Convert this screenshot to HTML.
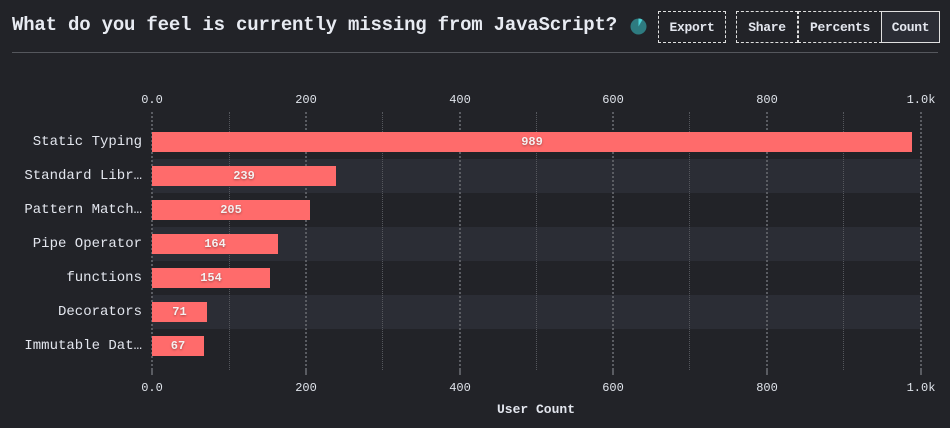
<!DOCTYPE html>
<html><head><meta charset="utf-8"><style>
*{margin:0;padding:0;box-sizing:border-box}
body{width:950px;height:428px;background:#222328;position:relative;overflow:hidden;font-family:"Liberation Mono","DejaVu Sans Mono",monospace;color:#e3e6ee}
.a{position:absolute}
.title{left:12px;top:14px;font-size:19px;font-weight:bold;letter-spacing:-0.2px;color:#e8ebf2;white-space:nowrap}
.btn{top:11px;height:32px;border:1px dashed #e0e0e0;font-size:13px;font-weight:bold;display:flex;align-items:center;justify-content:center;letter-spacing:-0.3px}
.hr{left:12px;top:52px;width:926px;height:1px;background:#55575d}
.stripe{left:152px;width:769px;height:34px;background:#2b2d35}
.grid{top:112px;height:258px;width:0;border-left:1px dotted #55575d}
.grid.maj{border-left:2px dotted #5a5c62}
.tick{width:2px;height:5px;background:#5a5c62}
.tl{font-size:12px;width:60px;text-align:center;color:#dfe3ea}
.lab{right:808px;font-size:14px;text-align:right;white-space:nowrap;color:#e3e6ee}
.bar{left:152px;height:20px;background:#ff6b6b;font-size:12px;font-weight:bold;color:#f5f0f0;display:flex;align-items:center;justify-content:center;text-shadow:0 1px 2px rgba(0,0,0,.35)}
</style></head><body>
<div class="a title">What do you feel is currently missing from JavaScript?</div>
<svg class="a" style="left:630px;top:18px" width="17" height="17"><circle cx="8.5" cy="8.5" r="8" fill="#2e7b80"/><path d="M8.5 8.5 L8.5 0.5 A8 8 0 0 1 12.5 1.6 Z" fill="#4fd1d6"/></svg>
<div class="a btn" style="left:658px;width:68px">Export</div>
<div class="a btn" style="left:736px;width:62px">Share</div>
<div class="a btn" style="left:798px;width:84px">Percents</div>
<div class="a btn" style="left:881px;width:59px;border:1px solid #e0e0e0;background:#2b2d35">Count</div>
<div class="a hr"></div>

<div class="a stripe" style="top:159px"></div>
<div class="a stripe" style="top:227px"></div>
<div class="a stripe" style="top:295px"></div>

<div class="a grid maj" style="left:151px"></div>
<div class="a grid" style="left:229px"></div>
<div class="a grid maj" style="left:305px"></div>
<div class="a grid" style="left:382px"></div>
<div class="a grid maj" style="left:459px"></div>
<div class="a grid" style="left:536px"></div>
<div class="a grid maj" style="left:612px"></div>
<div class="a grid" style="left:689px"></div>
<div class="a grid maj" style="left:766px"></div>
<div class="a grid" style="left:843px"></div>
<div class="a grid maj" style="left:920px"></div>

<div class="a tick" style="left:151px;top:370px"></div>
<div class="a tick" style="left:305px;top:370px"></div>
<div class="a tick" style="left:459px;top:370px"></div>
<div class="a tick" style="left:612px;top:370px"></div>
<div class="a tick" style="left:766px;top:370px"></div>
<div class="a tick" style="left:920px;top:370px"></div>

<div class="a tl" style="left:122px;top:93px">0.0</div>
<div class="a tl" style="left:276px;top:93px">200</div>
<div class="a tl" style="left:430px;top:93px">400</div>
<div class="a tl" style="left:583px;top:93px">600</div>
<div class="a tl" style="left:737px;top:93px">800</div>
<div class="a tl" style="left:891px;top:93px">1.0k</div>
<div class="a tl" style="left:122px;top:381px">0.0</div>
<div class="a tl" style="left:276px;top:381px">200</div>
<div class="a tl" style="left:430px;top:381px">400</div>
<div class="a tl" style="left:583px;top:381px">600</div>
<div class="a tl" style="left:737px;top:381px">800</div>
<div class="a tl" style="left:891px;top:381px">1.0k</div>
<div class="a" style="left:436px;top:402px;width:200px;text-align:center;font-size:13px;font-weight:bold">User Count</div>

<div class="a lab" style="top:134px">Static Typing</div>
<div class="a lab" style="top:168px">Standard Libr…</div>
<div class="a lab" style="top:202px">Pattern Match…</div>
<div class="a lab" style="top:236px">Pipe Operator</div>
<div class="a lab" style="top:270px">functions</div>
<div class="a lab" style="top:304px">Decorators</div>
<div class="a lab" style="top:338px">Immutable Dat…</div>

<div class="a bar" style="top:132px;width:760px">989</div>
<div class="a bar" style="top:166px;width:184px">239</div>
<div class="a bar" style="top:200px;width:158px">205</div>
<div class="a bar" style="top:234px;width:126px">164</div>
<div class="a bar" style="top:268px;width:118px">154</div>
<div class="a bar" style="top:302px;width:55px">71</div>
<div class="a bar" style="top:336px;width:52px">67</div>
</body></html>
